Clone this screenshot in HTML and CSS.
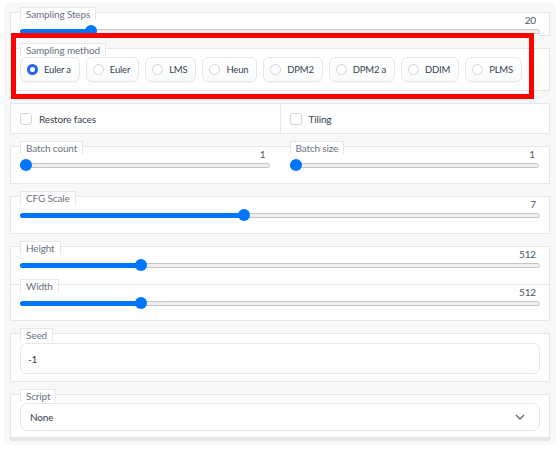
FILE: index.html
```html
<!DOCTYPE html>
<html lang="en">
<head>
    <meta charset="UTF-8">
    <title>txt2img settings</title>
    <link rel="stylesheet" href="styles.css">
</head>
<body>
    <div class="panel">

        <div class="block slider-block steps">
            <div class="head"><span class="label">Sampling Steps</span><span class="value">20</span></div>
            <div class="slider" style="--p:0.1275"><div class="track"><div class="fill"></div></div><div class="thumb"></div></div>
        </div>

        <div class="block sampler">
            <span class="label">Sampling method</span>
            <div class="radios">
                <label class="radio checked"><span class="dot"></span>Euler a</label>
                <label class="radio"><span class="dot"></span>Euler</label>
                <label class="radio"><span class="dot"></span>LMS</label>
                <label class="radio"><span class="dot"></span>Heun</label>
                <label class="radio"><span class="dot"></span>DPM2</label>
                <label class="radio"><span class="dot"></span>DPM2 a</label>
                <label class="radio"><span class="dot"></span>DDIM</label>
                <label class="radio"><span class="dot"></span>PLMS</label>
            </div>
        </div>

        <div class="block checks">
            <label class="check"><span class="box"></span>Restore faces</label>
            <label class="check"><span class="box"></span>Tiling</label>
        </div>

        <div class="block slider-block cols">
            <div class="col">
                <div class="head"><span class="label">Batch count</span><span class="value">1</span></div>
                <div class="slider" style="--p:0"><div class="track"><div class="fill"></div></div><div class="thumb"></div></div>
            </div>
            <div class="col">
                <div class="head"><span class="label">Batch size</span><span class="value">1</span></div>
                <div class="slider" style="--p:0"><div class="track"><div class="fill"></div></div><div class="thumb"></div></div>
            </div>
        </div>

        <div class="block slider-block">
            <div class="head"><span class="label">CFG Scale</span><span class="value">7</span></div>
            <div class="slider" style="--p:0.4286"><div class="track"><div class="fill"></div></div><div class="thumb"></div></div>
        </div>

        <div class="block size">
            <div class="sub">
                <div class="head"><span class="label">Height</span><span class="value">512</span></div>
                <div class="slider" style="--p:0.2258"><div class="track"><div class="fill"></div></div><div class="thumb"></div></div>
            </div>
            <div class="sub">
                <div class="head"><span class="label">Width</span><span class="value">512</span></div>
                <div class="slider" style="--p:0.2258"><div class="track"><div class="fill"></div></div><div class="thumb"></div></div>
            </div>
        </div>

        <div class="block seed">
            <span class="label">Seed</span>
            <div class="field">-1</div>
        </div>

        <div class="block script">
            <span class="label">Script</span>
            <div class="field select">
                None
                <svg width="10" height="6" viewBox="0 0 10 6"><polyline points="1,1 5,5 9,1" fill="none" stroke="#6b7280" stroke-width="1.5"/></svg>
            </div>
        </div>

    </div>

    <div class="highlight"></div>
</body>
</html>
```

FILE: styles.css
```css
body {
    margin: 0;
    background: #ffffff;
    font-family: Lato, "Liberation Sans", sans-serif;
    font-size: 10px;
    letter-spacing: -0.15px;
    color: #374151;
}

.panel {
    margin: 2px 4px 0 4px;
    padding: 10px 6px 4px 6px;
    background: #f8f8f9;
    border-radius: 8px;
    display: flex;
    flex-direction: column;
    gap: 12px;
}

.block {
    background: #ffffff;
    border: 1px solid #e5e7eb;
    box-sizing: border-box;
    padding: 0 9px;
}

.label {
    display: block;
    width: fit-content;
    margin-top: -6px;
    padding: 0 5px;
    line-height: 12px;
    background: #ffffff;
    border: 1px solid #e5e7eb;
    border-bottom: none;
    color: #6b7280;
    white-space: nowrap;
}

.head {
    display: flex;
    justify-content: space-between;
    align-items: flex-start;
}

.value {
    margin-top: 1px;
    padding-right: 4px;
    line-height: 12px;
    color: #4b5563;
}

/* sliders */
.slider {
    position: relative;
    height: 12px;
    margin-top: -1px;
}

.track {
    position: absolute;
    left: 0;
    right: 0;
    top: 4px;
    height: 5px;
    box-sizing: border-box;
    background: #efefef;
    border: 1px solid #c4c4c4;
    border-radius: 3px;
}

.fill {
    position: absolute;
    left: -1px;
    top: -1px;
    bottom: -1px;
    width: calc(var(--p) * (100% - 12px) + 6px);
    background: #0075ff;
    border-radius: 3px;
}

.thumb {
    position: absolute;
    top: 0;
    left: calc(var(--p) * (100% - 12px));
    width: 12px;
    height: 12px;
    border-radius: 50%;
    background: #0075ff;
}

.slider-block {
    height: 38px;
}

.steps {
    height: 24px;
}

.cols {
    display: flex;
    padding: 0;
}

.cols .col {
    flex: 1;
    padding: 0 10px 0 9px;
}

.cols .col + .col {
    padding-left: 10px;
}

.size {
    height: 75px;
    padding: 0;
}

.size .sub {
    height: 37px;
    box-sizing: border-box;
    padding: 0 9px;
}

.size .sub + .sub {
    border-top: 1px solid #e5e7eb;
}

/* sampling method */
.sampler {
    height: 43px;
}

.radios {
    display: flex;
    gap: 6px;
    margin-top: 1px;
}

.radio {
    display: flex;
    align-items: center;
    gap: 6px;
    height: 25px;
    box-sizing: border-box;
    padding: 0 8px 0 6px;
    border: 1px solid #e5e7eb;
    border-radius: 6px;
    background: linear-gradient(#ffffff, #f9fafb);
    box-shadow: 0 1px 1px rgba(0, 0, 0, 0.03);
    color: #374151;
    font-size: 9.5px;
    letter-spacing: -0.2px;
    white-space: nowrap;
}

.dot {
    width: 11px;
    height: 11px;
    box-sizing: border-box;
    border: 1px solid #d1d5db;
    border-radius: 50%;
    background: #ffffff;
}

.radio.checked .dot {
    border: 3.5px solid #2563eb;
    background: #ffffff;
}

/* checkboxes */
.checks {
    height: 31px;
    display: flex;
    padding: 0;
}

.check {
    flex: 1;
    display: flex;
    align-items: center;
    gap: 7px;
    padding-left: 9px;
}

.check + .check {
    border-left: 1px solid #e5e7eb;
}

.box {
    width: 12px;
    height: 12px;
    box-sizing: border-box;
    border: 1px solid #d1d5db;
    border-radius: 3px;
    background: #ffffff;
}

/* text fields */
.seed {
    height: 49px;
}

.script {
    height: 44px;
    box-shadow: 0 3px 0 #e5e7eb;
    margin-bottom: 3px;
}

.field {
    display: flex;
    align-items: center;
    justify-content: space-between;
    box-sizing: border-box;
    margin-top: 2px;
    height: 31px;
    padding: 0 14px 0 7px;
    border: 1px solid #e5e7eb;
    border-radius: 7px;
    background: #ffffff;
    color: #374151;
}

.select {
    height: 28px;
    margin-top: 1px;
    padding-left: 9px;
}

/* red annotation frame */
.highlight {
    position: absolute;
    left: 11px;
    top: 33px;
    width: 523px;
    height: 66px;
    box-sizing: border-box;
    border: 5px solid #ff0000;
}
```
